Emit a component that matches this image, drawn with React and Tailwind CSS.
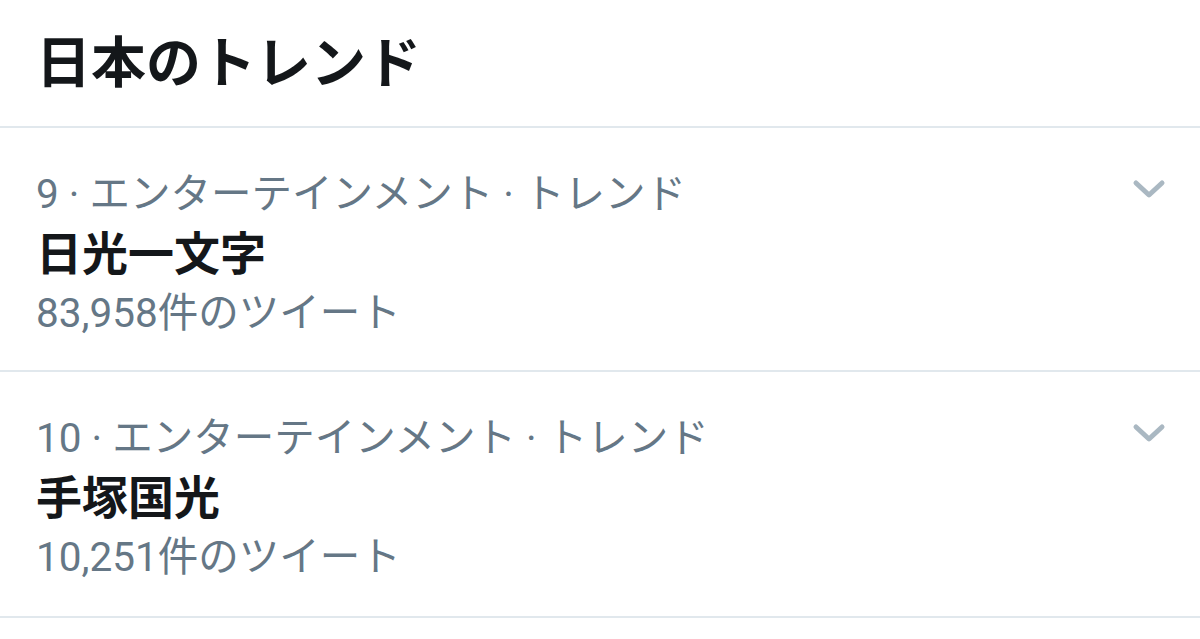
export default function App() {
  const rows = [
    { cat: "9 · エンターテインメント · トレンド", title: "日光一文字", count: "83,958件のツイート", pb: "pb-[28px]" },
    { cat: "10 · エンターテインメント · トレンド", title: "手塚国光", count: "10,251件のツイート", pb: "pb-[30px]" },
  ];
  return (
    <div className="w-[1200px] h-[639px] bg-white overflow-hidden font-['Roboto','Noto_Sans_CJK_JP',sans-serif]">
      <div className="h-[128px] flex items-center px-[36px] border-b-2 border-[#e1e8ed]">
        <h1 className="text-[55px] font-bold text-[#14171a] leading-none">日本のトレンド</h1>
      </div>
      {rows.map((r, i) => (
        <div key={i} className={`flex justify-between pl-[36px] pr-[34px] pt-[36px] border-b-2 border-[#e1e8ed] ${r.pb}`}>
          <div className="flex flex-col">
            <div className="text-[40.5px] leading-[60px] text-[#657786]">{r.cat}</div>
            <div className="text-[46px] leading-[60px] font-bold text-[#14171a]">{r.title}</div>
            <div className="text-[40.5px] leading-[58px] text-[#657786]">{r.count}</div>
          </div>
          <svg className="mt-[14px]" width="34" height="24" viewBox="0 0 34 24" fill="none">
            <path d="M4 5 L17 17 L30 5" stroke="#aab8c2" strokeWidth="5" strokeLinecap="round" strokeLinejoin="round" />
          </svg>
        </div>
      ))}
    </div>
  );
}
